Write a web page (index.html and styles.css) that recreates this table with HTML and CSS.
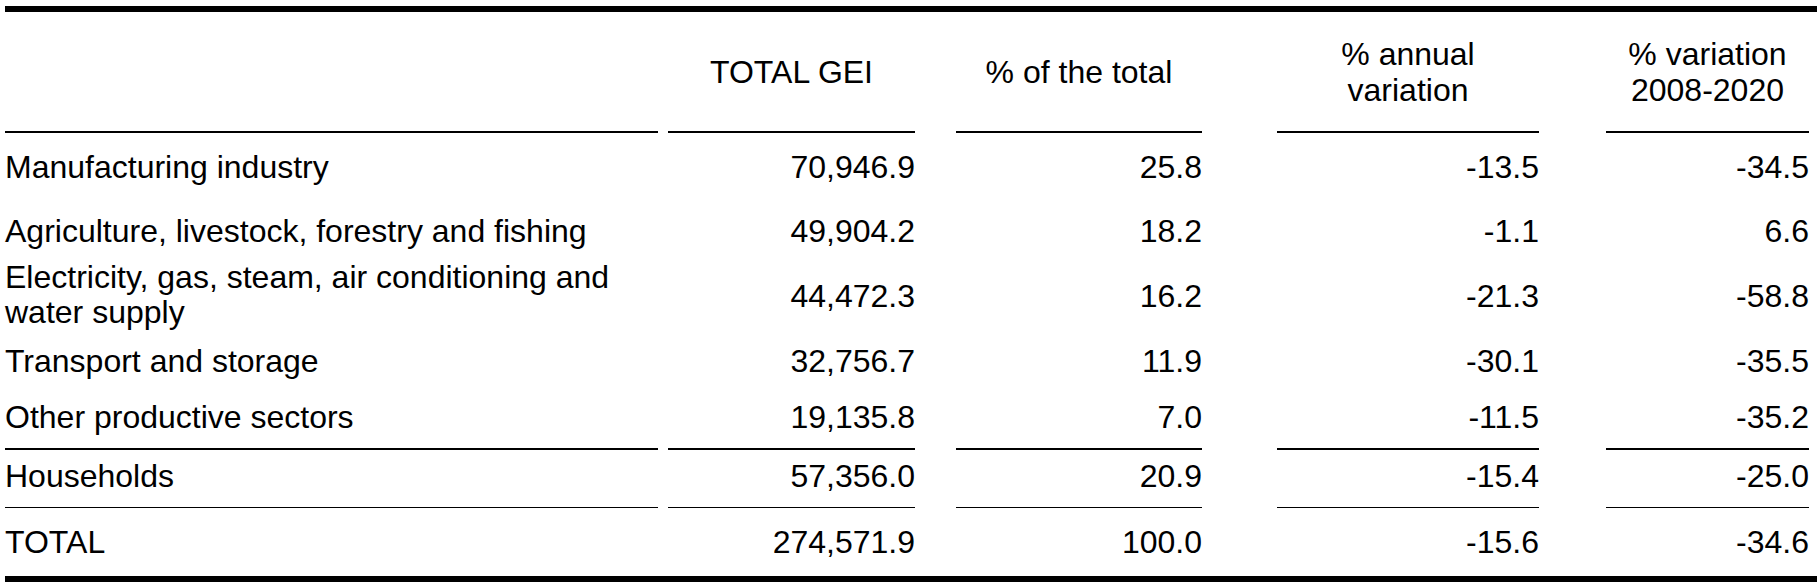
FILE: index.html
```html
<!DOCTYPE html>
<html lang="en">
<head>
<meta charset="utf-8">
<title>GEI by sector</title>
<link rel="stylesheet" href="styles.css">
</head>
<body>
<div class="tbl">
  <div class="row head">
    <div class="c lab"></div>
    <div class="c num"><span>TOTAL GEI</span></div>
    <div class="c num"><span>% of the total</span></div>
    <div class="c num"><span>% annual<br>variation</span></div>
    <div class="c num"><span>% variation<br>2008-2020</span></div>
  </div>
  <div class="row r-manuf">
    <div class="c lab">Manufacturing industry</div>
    <div class="c num">70,946.9</div>
    <div class="c num">25.8</div>
    <div class="c num">-13.5</div>
    <div class="c num">-34.5</div>
  </div>
  <div class="row r-agri">
    <div class="c lab">Agriculture, livestock, forestry and fishing</div>
    <div class="c num">49,904.2</div>
    <div class="c num">18.2</div>
    <div class="c num">-1.1</div>
    <div class="c num">6.6</div>
  </div>
  <div class="row r-elec">
    <div class="c lab two">Electricity, gas, steam, air conditioning and<br>water supply</div>
    <div class="c num">44,472.3</div>
    <div class="c num">16.2</div>
    <div class="c num">-21.3</div>
    <div class="c num">-58.8</div>
  </div>
  <div class="row r-trans">
    <div class="c lab">Transport and storage</div>
    <div class="c num">32,756.7</div>
    <div class="c num">11.9</div>
    <div class="c num">-30.1</div>
    <div class="c num">-35.5</div>
  </div>
  <div class="row r-other">
    <div class="c lab">Other productive sectors</div>
    <div class="c num">19,135.8</div>
    <div class="c num">7.0</div>
    <div class="c num">-11.5</div>
    <div class="c num">-35.2</div>
  </div>
  <div class="row r-house">
    <div class="c lab">Households</div>
    <div class="c num">57,356.0</div>
    <div class="c num">20.9</div>
    <div class="c num">-15.4</div>
    <div class="c num">-25.0</div>
  </div>
  <div class="row r-total">
    <div class="c lab">TOTAL</div>
    <div class="c num">274,571.9</div>
    <div class="c num">100.0</div>
    <div class="c num">-15.6</div>
    <div class="c num">-34.6</div>
  </div>
</div>
</body>
</html>
```
FILE: styles.css
```css
* { box-sizing: border-box; }

html, body {
  background: #fff;
}

body {
  margin: 0;
  font-family: "Liberation Sans", Arial, sans-serif;
  font-size: 32px;
  line-height: 37px;
  color: #000;
  overflow: hidden;
}

.tbl {
  margin: 6px 0 0 5px;
  border-top: 6px solid #000;
  border-bottom: 6px solid #000;
}

.row {
  display: grid;
  grid-template-columns: 653px 257px 287px 337px 270px 1fr;
  align-items: stretch;
}

.c {
  white-space: nowrap;
}

.c:nth-child(2) { margin-left: 10px; }
.c:nth-child(3) { margin-left: 41px; }
.c:nth-child(4) { margin-left: 75px; }
.c:nth-child(5) { margin-left: 67px; }

.num {
  text-align: right;
}

/* header */
.head {
  height: 121px;
}
.head .c {
  border-bottom: 2px solid #000;
  display: flex;
  align-items: center;
  justify-content: center;
  text-align: center;
}
.head .c span {
  line-height: 36px;
}

/* body rows */
.r-manuf { height: 67px; padding-top: 16px; }
.r-agri  { height: 60px; padding-top: 13px; }
.r-elec  { height: 83px; }
.r-elec .num { padding-top: 18px; }
.r-elec .two { line-height: 35px; }
.r-trans { height: 56px; }
.r-other { height: 51px; }
.r-other .c { border-bottom: 2px solid #000; }
.r-house { height: 58px; padding-top: 8px; }
.r-house .c { border-bottom: 1px solid #000; }
.r-total { height: 68px; padding-top: 16px; }
```
